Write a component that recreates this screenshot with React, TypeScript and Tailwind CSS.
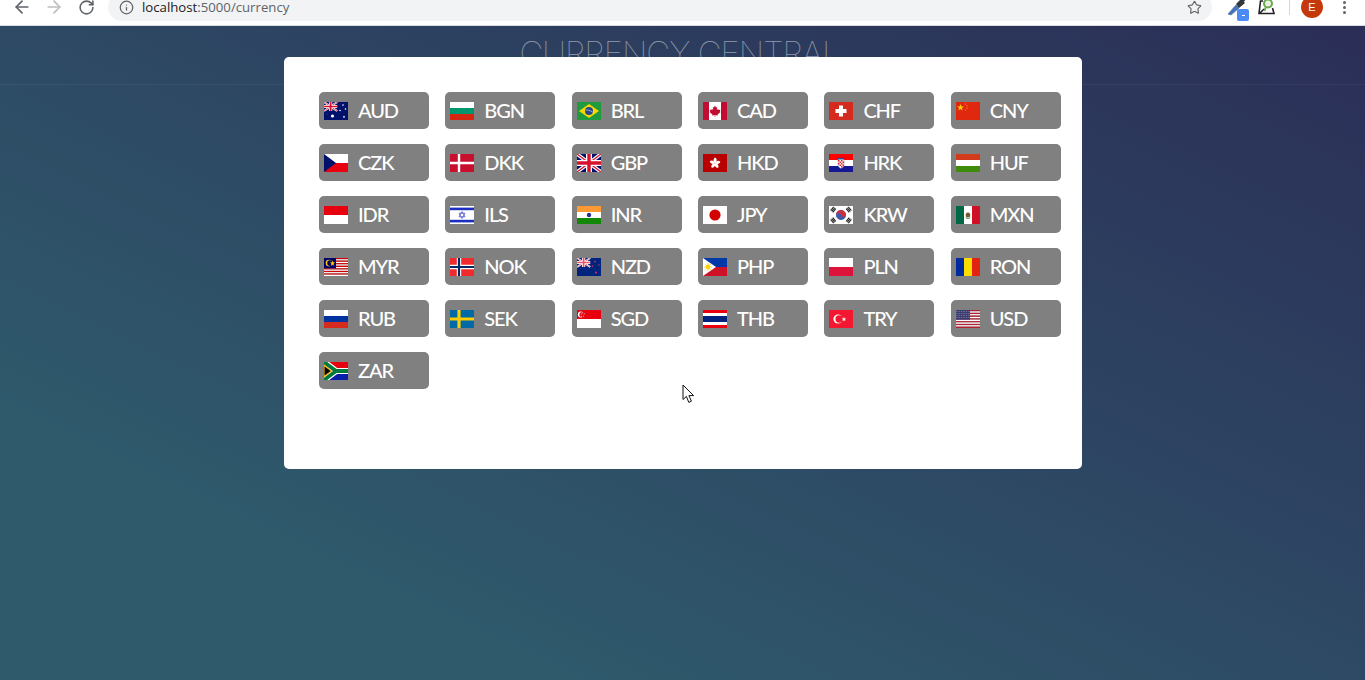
import React from "react";
import { ArrowLeft, ArrowRight, RotateCw, Info, Star } from "lucide-react";

const Stripes = ({ colors }: { colors: string[] }) => {
  const h = 18 / colors.length;
  return (
    <>
      {colors.map((c, i) => (
        <rect key={i} x="0" y={i * h} width="24" height={h + 0.02} fill={c} />
      ))}
    </>
  );
};
const VStripes = ({ colors }: { colors: string[] }) => {
  const w = 24 / colors.length;
  return (
    <>
      {colors.map((c, i) => (
        <rect key={i} x={i * w} y="0" width={w + 0.02} height="18" fill={c} />
      ))}
    </>
  );
};
const Union = () => (
  <>
    <rect width="24" height="18" fill="#00116b" />
    <path d="M0 0L24 18M24 0L0 18" stroke="#fff" strokeWidth="3.6" />
    <path d="M0 0L24 18M24 0L0 18" stroke="#d8112c" strokeWidth="1.3" />
    <path d="M12 0V18M0 9H24" stroke="#fff" strokeWidth="6" />
    <path d="M12 0V18M0 9H24" stroke="#d8112c" strokeWidth="3.4" />
  </>
);
const Dot = ({ x, y, r = 0.8, c = "#fff" }: { x: number; y: number; r?: number; c?: string }) => (
  <circle cx={x} cy={y} r={r} fill={c} />
);
const Trigram = ({ x, y, a }: { x: number; y: number; a: number }) => (
  <g transform={`rotate(${a} ${x} ${y})`} fill="#111">
    <rect x={x - 2.4} y={y - 1.9} width="4.8" height="1" />
    <rect x={x - 2.4} y={y - 0.5} width="4.8" height="1" />
    <rect x={x - 2.4} y={y + 0.9} width="4.8" height="1" />
  </g>
);

const flags: Record<string, React.ReactNode> = {
  AUD: (
    <>
      <rect width="24" height="18" fill="#00116b" />
      <g transform="scale(0.55 0.5)"><Union /></g>
      <Dot x={8.5} y={14} r={1.6} />
      <Dot x={19} y={3} /><Dot x={21.5} y={7} /><Dot x={16} y={8.5} /><Dot x={20} y={14.8} r={0.9} /><Dot x={3} y={12} r={0.3} />
    </>
  ),
  BGN: <Stripes colors={["#ffffff", "#00966e", "#d62612"]} />,
  BRL: (
    <>
      <rect width="24" height="18" fill="#1f9a3c" />
      <path d="M12 2L22 9L12 16L2 9Z" fill="#f8d800" />
      <circle cx="12" cy="9" r="4" fill="#26478f" />
      <path d="M8.3 8Q12 7.5 15.7 10" stroke="#dfe6ee" strokeWidth="0.6" fill="none" />
    </>
  ),
  CAD: (
    <>
      <rect width="24" height="18" fill="#fff" />
      <rect width="6" height="18" fill="#c10d32" />
      <rect x="18" width="6" height="18" fill="#c10d32" />
      <path d="M12 3.5L13 5.6L14.2 5L13.8 8L15.2 6.8L15.6 8L17.4 7.7L16.8 9.5L17.5 10L14.6 12.4L14.9 13.4L12.3 13V15H11.7V13L9.1 13.4L9.4 12.4L6.5 10L7.2 9.5L6.6 7.7L8.4 8L8.8 6.8L10.2 8L9.8 5L11 5.6Z" fill="#c10d32" />
    </>
  ),
  CHF: (
    <>
      <rect width="24" height="18" fill="#d52b1e" />
      <path d="M10 3.5H14V7H17.5V11H14V14.5H10V11H6.5V7H10Z" fill="#fff" />
    </>
  ),
  CNY: (
    <>
      <rect width="24" height="18" fill="#e0280f" />
      <path d="M4.5 2L5.4 4.5L8 4.5L5.9 6.1L6.7 8.6L4.5 7.1L2.3 8.6L3.1 6.1L1 4.5L3.6 4.5Z" fill="#fbd000" />
      <Dot x={9.4} y={2} r={0.55} c="#fbc000" /><Dot x={11} y={3.8} r={0.55} c="#fbc000" /><Dot x={11} y={6} r={0.55} c="#fbc000" /><Dot x={9.4} y={8} r={0.55} c="#fbc000" />
    </>
  ),
  CZK: (
    <>
      <rect width="24" height="9" fill="#fff" />
      <rect y="9" width="24" height="9" fill="#e8000f" />
      <path d="M0 0L12 9L0 18Z" fill="#00116b" />
    </>
  ),
  DKK: (
    <>
      <rect width="24" height="18" fill="#c8102e" />
      <path d="M9 0V18M0 9H24" stroke="#fff" strokeWidth="2.4" />
    </>
  ),
  GBP: <Union />,
  HKD: (
    <>
      <rect width="24" height="18" fill="#b90000" />
      {[0, 72, 144, 216, 288].map((a) => (
        <path key={a} transform={`rotate(${a} 12 9.2)`} d="M12 9.2C10.2 8 9.8 5.2 12 3.6C14.2 4.6 14.2 7.4 12 9.2Z" fill="#fff" />
      ))}
    </>
  ),
  HRK: (
    <>
      <Stripes colors={["#ff0000", "#ffffff", "#171796"]} />
      <path d="M9 4H15V11C15 13 13.5 14 12 14.5C10.5 14 9 13 9 11Z" fill="#fff" stroke="#1d3a8f" strokeWidth="0.3" />
      <path d="M9 4H15V5.5H9Z" fill="#314a9c" />
      <g fill="#e0202a">
        <rect x="9" y="6" width="1.5" height="1.5" /><rect x="12" y="6" width="1.5" height="1.5" />
        <rect x="10.5" y="7.5" width="1.5" height="1.5" /><rect x="13.5" y="7.5" width="1.5" height="1.5" />
        <rect x="9" y="9" width="1.5" height="1.5" /><rect x="12" y="9" width="1.5" height="1.5" />
        <rect x="10.5" y="10.5" width="1.5" height="1.5" /><rect x="13.5" y="10.5" width="1.5" height="1.5" />
        <rect x="12" y="12" width="1.5" height="1.5" />
      </g>
    </>
  ),
  HUF: <Stripes colors={["#d43a1c", "#ffffff", "#3f8c0c"]} />,
  IDR: <Stripes colors={["#e8000f", "#ffffff"]} />,
  ILS: (
    <>
      <rect width="24" height="18" fill="#fff" />
      <rect y="1.6" width="24" height="2.6" fill="#1a2fc0" />
      <rect y="13.8" width="24" height="2.6" fill="#1a2fc0" />
      <path d="M12 5.5L15 10.8H9ZM12 12.5L9 7.2H15Z" fill="none" stroke="#3949c4" strokeWidth="0.7" />
    </>
  ),
  INR: (
    <>
      <Stripes colors={["#ff9a33", "#ffffff", "#138808"]} />
      <circle cx="12" cy="9" r="2.2" fill="#2a2f8f" />
    </>
  ),
  JPY: (
    <>
      <rect width="24" height="18" fill="#fff" />
      <circle cx="12" cy="9" r="5.6" fill="#d30000" />
    </>
  ),
  KRW: (
    <>
      <rect width="24" height="18" fill="#fff" />
      <g transform="rotate(-15 12 9)">
        <circle cx="12" cy="9" r="5" fill="#3d5aa8" />
        <path d="M7 9A5 5 0 0 1 17 9A2.5 2.5 0 0 1 12 9A2.5 2.5 0 0 0 7 9Z" fill="#cd2e3a" />
      </g>
      <Trigram x={4.2} y={3.6} a={-50} />
      <Trigram x={19.8} y={3.6} a={50} />
      <Trigram x={4.2} y={14.4} a={50} />
      <Trigram x={19.8} y={14.4} a={-50} />
    </>
  ),
  MXN: (
    <>
      <VStripes colors={["#006847", "#ffffff", "#ce1126"]} />
      <ellipse cx="12" cy="9" rx="2.3" ry="2.6" fill="#7a5a2c" />
      <path d="M9.6 11.6Q12 14 14.4 11.6" stroke="#2f8a4e" strokeWidth="0.8" fill="none" />
    </>
  ),
  MYR: (
    <>
      <Stripes colors={["#cc0001", "#fff", "#cc0001", "#fff", "#cc0001", "#fff", "#cc0001", "#fff", "#cc0001", "#fff", "#cc0001", "#fff", "#cc0001", "#fff"]} />
      <rect width="12" height="10.3" fill="#010066" />
      <circle cx="5" cy="5.1" r="3.3" fill="#fc0" />
      <circle cx="6" cy="5.1" r="2.8" fill="#010066" />
      <path d="M8.5 2.5L9.2 4.3L11 4.6L9.6 5.8L10 7.7L8.5 6.7L7 7.7L7.4 5.8L6 4.6L7.8 4.3Z" fill="#fc0" />
    </>
  ),
  NOK: (
    <>
      <rect width="24" height="18" fill="#ef2b2d" />
      <path d="M9 0V18M0 9H24" stroke="#fff" strokeWidth="4.4" />
      <path d="M9 0V18M0 9H24" stroke="#002868" strokeWidth="2.2" />
    </>
  ),
  NZD: (
    <>
      <rect width="24" height="18" fill="#00247d" />
      <g transform="scale(0.55 0.5)">
        <rect width="24" height="18" fill="#00247d" />
        <path d="M0 0L24 18M24 0L0 18" stroke="#fff" strokeWidth="3.4" />
        <path d="M0 0L24 18M24 0L0 18" stroke="#e8546e" strokeWidth="1.3" />
        <path d="M12 0V18M0 9H24" stroke="#fff" strokeWidth="6" />
        <path d="M12 0V18M0 9H24" stroke="#e8546e" strokeWidth="3.2" />
      </g>
      <Dot x={18} y={3.6} c="#e8344e" /><Dot x={15.5} y={8} c="#e8344e" /><Dot x={22} y={7} r={0.7} c="#e8344e" /><Dot x={19} y={14.5} r={1} c="#e8344e" />
    </>
  ),
  PHP: (
    <>
      <rect width="24" height="9" fill="#0038a8" />
      <rect y="9" width="24" height="9" fill="#ce1126" />
      <path d="M0 0L13 9L0 18Z" fill="#fff" />
      <circle cx="5" cy="9" r="2.4" fill="#fcd116" />
      <path d="M5 5V13M1 9H9M2.2 6.2L7.8 11.8M7.8 6.2L2.2 11.8" stroke="#fcd116" strokeWidth="0.7" />
    </>
  ),
  PLN: <Stripes colors={["#ffffff", "#dc143c"]} />,
  RON: <VStripes colors={["#002b9f", "#fcdd00", "#e1230f"]} />,
  RUB: <Stripes colors={["#ffffff", "#0033a0", "#d52b1e"]} />,
  SEK: (
    <>
      <rect width="24" height="18" fill="#006aa7" />
      <path d="M9 0V18M0 9H24" stroke="#fecc00" strokeWidth="3.2" />
    </>
  ),
  SGD: (
    <>
      <Stripes colors={["#e8000f", "#ffffff"]} />
      <circle cx="3.8" cy="4.5" r="2.9" fill="#fff" />
      <circle cx="5" cy="4.5" r="2.6" fill="#e8000f" />
      <Dot x={5.2} y={2.7} r={0.5} /><Dot x={7.2} y={3.8} r={0.5} /><Dot x={6.6} y={6} r={0.5} /><Dot x={4.6} y={6.2} r={0.5} /><Dot x={4.2} y={4} r={0.5} />
    </>
  ),
  THB: <Stripes colors={["#e8000f", "#ffffff", "#00247d", "#00247d", "#ffffff", "#e8000f"]} />,
  TRY: (
    <>
      <rect width="24" height="18" fill="#f31830" />
      <circle cx="9" cy="9" r="4.6" fill="#fff" />
      <circle cx="10.2" cy="9" r="3.7" fill="#f31830" />
      <path d="M15 6.9L15.6 8.4L17.3 8.5L16 9.6L16.4 11.2L15 10.3L13.6 11.2L14 9.6L12.7 8.5L14.4 8.4Z" fill="#fff" />
    </>
  ),
  USD: (
    <>
      <Stripes colors={["#b22234", "#fff", "#b22234", "#fff", "#b22234", "#fff", "#b22234", "#fff", "#b22234", "#fff", "#b22234", "#fff", "#b22234"]} />
      <rect width="14" height="9.7" fill="#3c3b6e" />
      <path d="M0 1.5H14M0 3.5H14M0 5.5H14M0 7.5H14" stroke="#b8bcd4" strokeWidth="0.6" strokeDasharray="0.7 1" />
    </>
  ),
  ZAR: (
    <>
      <rect width="24" height="9" fill="#e8000f" />
      <rect y="9" width="24" height="9" fill="#0a1fa8" />
      <path d="M0 0L12 9L0 18M12 9H24" stroke="#fff" strokeWidth="6.2" fill="none" />
      <path d="M0 0L12 9L0 18M12 9H24" stroke="#007a3d" strokeWidth="3.8" fill="none" />
      <path d="M0 3.2L7.6 9L0 14.8Z" fill="#000" stroke="#ffb915" strokeWidth="1.1" />
    </>
  ),
};

const codes = [
  "AUD", "BGN", "BRL", "CAD", "CHF", "CNY",
  "CZK", "DKK", "GBP", "HKD", "HRK", "HUF",
  "IDR", "ILS", "INR", "JPY", "KRW", "MXN",
  "MYR", "NOK", "NZD", "PHP", "PLN", "RON",
  "RUB", "SEK", "SGD", "THB", "TRY", "USD",
  "ZAR",
];

function Toolbar() {
  return (
    <div className="h-[26px] overflow-hidden bg-white border-b border-[#dadce0]">
      <div className="h-[14px] flex items-center pl-[6px] font-['Open_Sans',sans-serif]">
        <div className="w-[32px] flex justify-center"><ArrowLeft size={20} strokeWidth={2} color="#5f6368" /></div>
        <div className="w-[32px] flex justify-center"><ArrowRight size={20} strokeWidth={2} color="#bcbec1" /></div>
        <div className="w-[32px] flex justify-center"><RotateCw size={17} strokeWidth={2.2} color="#5f6368" /></div>
        <div className="ml-[6px] w-[1104px] h-[28px] shrink-0 rounded-full bg-[#f1f3f4] flex items-center pl-[11px] pr-[10px]">
          <Info size={15} strokeWidth={2} color="#5f6368" />
          <span className="ml-[8px] pt-[1px] text-[13.2px] text-[#5f6368] leading-none">
            <span className="text-[#202124]">localhost</span>:5000/currency
          </span>
          <Star size={15} strokeWidth={1.8} color="#5f6368" className="ml-auto" />
        </div>
        <div className="relative ml-[12px] w-[24px] h-[14px] shrink-0">
          <svg width="22" height="20" viewBox="0 0 22 20" className="absolute -top-[4px] left-[3px]">
            <path d="M1 18L9 9L12 12L4 19Z" fill="#3f73c4" stroke="#6b7a90" strokeWidth="0.8" />
            <path d="M9 8L14 3L18 7L12 12Z" fill="#33373d" />
            <path d="M13 5L16 0H19V3L16 7Z" fill="#33373d" />
          </svg>
          <div className="absolute left-[13px] top-[9px] w-[12px] h-[12px] rounded-[2px] bg-[#4c8bf5] flex items-center justify-center">
            <div className="w-[3px] h-px bg-white" />
          </div>
        </div>
        <svg width="20" height="18" viewBox="0 0 20 18" className="ml-[9px] shrink-0">
          <path d="M6 3H3.5L2 15.5H17L15.5 10" fill="none" stroke="#202124" strokeWidth="1.6" />
          <path d="M3 15L7 11" stroke="#202124" strokeWidth="1.6" />
          <circle cx="11" cy="5.5" r="4" fill="#e8f1df" stroke="#6aa84f" strokeWidth="2" />
          <path d="M8.5 9.5L7.5 13" stroke="#6aa84f" strokeWidth="2" />
        </svg>
        <div className="ml-[12px] w-px h-[16px] bg-[#d5d7da] shrink-0" />
        <div className="ml-[11px] w-[22px] h-[22px] shrink-0 rounded-full bg-[#c5380b] text-white text-[11px] flex items-center justify-center font-['Liberation_Sans',sans-serif]">E</div>
        <div className="ml-[20px] flex flex-col gap-[2px] shrink-0">
          <div className="w-[3px] h-[3px] rounded-full bg-[#5f6368]" />
          <div className="w-[3px] h-[3px] rounded-full bg-[#5f6368]" />
          <div className="w-[3px] h-[3px] rounded-full bg-[#5f6368]" />
        </div>
      </div>
    </div>
  );
}

export default function App() {
  return (
    <div className="h-[680px] overflow-hidden flex flex-col font-['Lato',sans-serif]">
      <Toolbar />
      <main className="relative flex-1 bg-[linear-gradient(to_bottom_left,#2b2e57_0%,#2f5a6c_80%)]">
        <header className="h-[59px] border-b border-white/5 flex justify-center">
          <h1 className="mt-[7px] mr-[6px] text-[33px] leading-[40px] font-thin font-['Inter',sans-serif] tracking-[-1px] text-white/50">CURRENCY CENTRAL</h1>
        </header>
        <section className="absolute left-[284px] top-[31px] w-[798px] bg-white rounded-[5px] pt-[35px] pb-[80px] pl-[35px]">
          <div className="grid grid-cols-[repeat(6,110px)] gap-x-[16.35px] gap-y-[15px]">
            {codes.map((c) => (
              <button key={c} className="h-[37px] rounded-[5px] bg-[#808080] flex items-center pl-[5px] text-white text-[20px] font-medium tracking-[-1.1px]">
                <svg width="24" height="18" viewBox="0 0 24 18" className="shrink-0">{flags[c]}</svg>
                <span className="ml-[10px] pb-[1px]">{c}</span>
              </button>
            ))}
          </div>
        </section>
        <svg width="14" height="20" viewBox="0 0 14 20" className="absolute left-[682px] top-[358px]">
          <path d="M1 1V15.5L4.4 12.4L6.8 18.4L9.4 17.2L6.9 11.6H11.6Z" fill="#fff" stroke="#111" strokeWidth="1" />
        </svg>
      </main>
    </div>
  );
}
